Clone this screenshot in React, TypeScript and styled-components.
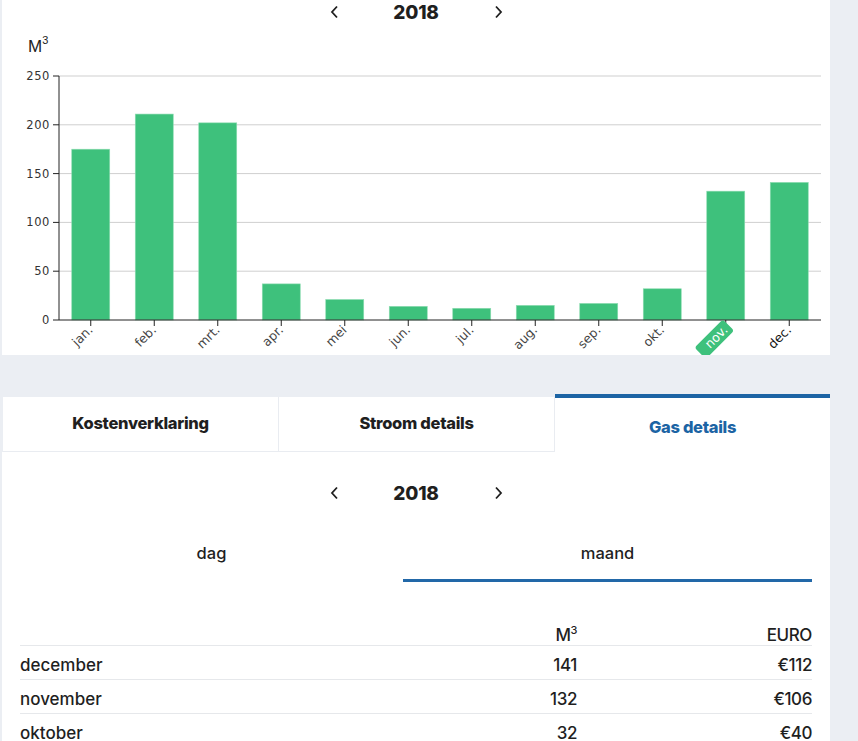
import React, { useState } from 'react';
import styled, { createGlobalStyle } from 'styled-components';

const GlobalStyle = createGlobalStyle`
  body {
    margin: 0;
    background: #ebeef3;
    font-family: Inter, "Noto Sans", sans-serif;
    color: #1f1f1f;
  }
`;

const Page = styled.div`
  width: 858px;
  padding-bottom: 40px;
`;

const ChartCard = styled.section`
  background: #fff;
  margin-left: 2px;
  width: 828px;
  height: 355px;
`;

const YearNav = styled.div<{ $top?: number }>`
  display: flex;
  align-items: center;
  justify-content: center;
  gap: 52px;
  height: 24px;
  padding-top: ${p => p.$top ?? 0}px;
`;

const Chevron = styled.button`
  display: flex;
  align-items: center;
  justify-content: center;
  width: 10px;
  height: 20px;
  padding: 0;
  border: none;
  background: none;
  color: #1f1f1f;
  cursor: pointer;
`;

const Year = styled.span`
  font-size: 19px;
  font-weight: 800;
  letter-spacing: -0.2px;
  width: 50px;
  text-align: center;
`;

const TabBar = styled.div`
  display: flex;
  align-items: flex-end;
  margin: 39px 0 0 3px;
  width: 827px;
`;

const Tab = styled.button<{ $active?: boolean }>`
  flex: 1;
  height: ${p => (p.$active ? 58 : 55)}px;
  background: #fff;
  border: none;
  border-top: ${p => (p.$active ? '4px solid #1c64a4' : 'none')};
  border-right: ${p => (p.$active ? 'none' : '1px solid #e9ecf1')};
  border-bottom: ${p => (p.$active ? 'none' : '1px solid #e9ecf1')};
  font-family: Inter, sans-serif;
  font-size: 16.5px;
  font-weight: 800;
  letter-spacing: -0.3px;
  color: ${p => (p.$active ? '#1c64a4' : '#1f1f1f')};
  padding: ${p => (p.$active ? '3px 0 0' : '0 0 2px')};
  cursor: pointer;
`;

const ContentCard = styled.section`
  background: #fff;
  margin-left: 2px;
  width: 828px;
  padding: 0 18px 20px;
  box-sizing: border-box;
`;

const SubTabs = styled.div`
  display: grid;
  grid-template-columns: 383px 409px;
  margin-top: 17px;
`;

const SubTab = styled.button<{ $active?: boolean }>`
  background: none;
  border: none;
  border-bottom: 3px solid ${p => (p.$active ? '#2268a8' : 'transparent')};
  padding: 20px 0 15px;
  line-height: 22px;
  font-family: Inter, sans-serif;
  font-size: 16.5px;
  font-weight: 500;
  color: #1f1f1f;
  cursor: pointer;
`;

const Table = styled.div`
  margin-top: 33px;
`;

const Row = styled.div<{ $head?: boolean }>`
  display: grid;
  grid-template-columns: 1fr 150px 235px;
  border-bottom: 1px solid #e6e8eb;
  padding: ${p => (p.$head ? '10px 0 0' : '8px 0 3px')};
  line-height: ${p => (p.$head ? 20 : 22)}px;
  font-size: 17px;
  font-weight: 500;
  &:last-child {
    border-bottom: none;
  }
`;

const Cell = styled.span<{ $num?: boolean }>`
  text-align: ${p => (p.$num ? 'right' : 'left')};
  letter-spacing: ${p => (p.$num ? '-0.4px' : '0')};
  sup {
    font-size: 11px;
    line-height: 0;
  }
`;

const months = ['jan.', 'feb.', 'mrt.', 'apr.', 'mei', 'jun.', 'jul.', 'aug.', 'sep.', 'okt.', 'nov.', 'dec.'];
const usage = [175, 211, 202, 37, 21, 14, 12, 15, 17, 32, 132, 141];

const rows = [
  { month: 'december', m3: 141, euro: 112 },
  { month: 'november', m3: 132, euro: 106 },
  { month: 'oktober', m3: 32, euro: 40 },
];

const ChevronIcon = ({ dir }: { dir: 'left' | 'right' }) => (
  <svg width="9" height="14" viewBox="0 0 9 14">
    <path
      d={dir === 'left' ? 'M7 1.5 L2 7 L7 12.5' : 'M2 1.5 L7 7 L2 12.5'}
      fill="none"
      stroke="currentColor"
      strokeWidth="1.8"
    />
  </svg>
);

const Nav = ({ top }: { top?: number }) => (
  <YearNav $top={top}>
    <Chevron aria-label="vorige"><ChevronIcon dir="left" /></Chevron>
    <Year>2018</Year>
    <Chevron aria-label="volgende"><ChevronIcon dir="right" /></Chevron>
  </YearNav>
);

// chart drawn in page coordinates through the viewBox
const X0 = 59;
const X1 = 821;
const Y0 = 320;
const STEP = (X1 - X0) / 12;
const BAR = 38;
const yOf = (v: number) => Y0 - v * 0.976;

const UsageChart = ({ selected }: { selected: number }) => (
  <svg width="828" height="331" viewBox="2 24 828 331" style={{ display: 'block' }}>
    <text x="28" y="52" fontFamily="'Liberation Sans', Arial, sans-serif" fontSize="17" fill="#222">
      M<tspan fontSize="11" dy="-8">3</tspan>
    </text>
    {[0, 50, 100, 150, 200, 250].map(v => (
      <g key={v} fontFamily="'DejaVu Sans', sans-serif" fontSize="11.5" fill="#333">
        {v > 0 && <line x1={X0} x2={X1} y1={yOf(v)} y2={yOf(v)} stroke="#cfcfcf" />}
        <line x1={X0 - 6} x2={X0} y1={yOf(v)} y2={yOf(v)} stroke="#222" />
        <text x={X0 - 9} y={yOf(v) + 4} textAnchor="end" letterSpacing="0.6">{v}</text>
      </g>
    ))}
    {usage.map((v, i) => {
      const cx = X0 + STEP * (i + 0.5);
      return (
        <rect key={i} x={cx - BAR / 2} y={yOf(v)} width={BAR} height={Y0 - yOf(v)} fill="#3ec17c" stroke="#8fdcb2" strokeWidth="0.6" />
      );
    })}
    <line x1={X0} x2={X0} y1={yOf(250)} y2={Y0} stroke="#222" />
    <line x1={X0} x2={X1} y1={Y0} y2={Y0} stroke="#222" />
    {months.map((m, i) => {
      const cx = X0 + STEP * (i + 0.5);
      const active = i === selected;
      return (
        <g key={m} transform={`translate(${cx},${Y0})`} fontFamily="'DejaVu Sans', sans-serif" fontSize="12.5">
          <line y1="0" y2="6" stroke="#222" />
          <g transform="translate(2,10) rotate(-45)">
            {active && <rect x="-36" y="-11" width="40" height="16" rx="3" fill="#3ec17c" />}
            <text x="0" y="1" textAnchor="end" fill={active ? '#fff' : i === 11 ? '#111' : '#444'}>{m}</text>
          </g>
        </g>
      );
    })}
  </svg>
);

const App: React.FC = () => {
  const [tab, setTab] = useState(2);
  const [period, setPeriod] = useState('maand');
  const tabs = ['Kostenverklaring', 'Stroom details', 'Gas details'];

  return (
    <Page>
      <GlobalStyle />
      <ChartCard>
        <Nav />
        <UsageChart selected={10} />
      </ChartCard>

      <TabBar>
        {tabs.map((t, i) => (
          <Tab key={t} $active={tab === i} onClick={() => setTab(i)}>{t}</Tab>
        ))}
      </TabBar>

      <ContentCard>
        <Nav top={29} />
        <SubTabs>
          {['dag', 'maand'].map(p => (
            <SubTab key={p} $active={period === p} onClick={() => setPeriod(p)}>{p}</SubTab>
          ))}
        </SubTabs>
        <Table>
          <Row $head>
            <Cell />
            <Cell $num>M<sup>3</sup></Cell>
            <Cell $num>EURO</Cell>
          </Row>
          {rows.map(r => (
            <Row key={r.month}>
              <Cell>{r.month}</Cell>
              <Cell $num>{r.m3}</Cell>
              <Cell $num>€{r.euro}</Cell>
            </Row>
          ))}
        </Table>
      </ContentCard>
    </Page>
  );
};

export default App;
